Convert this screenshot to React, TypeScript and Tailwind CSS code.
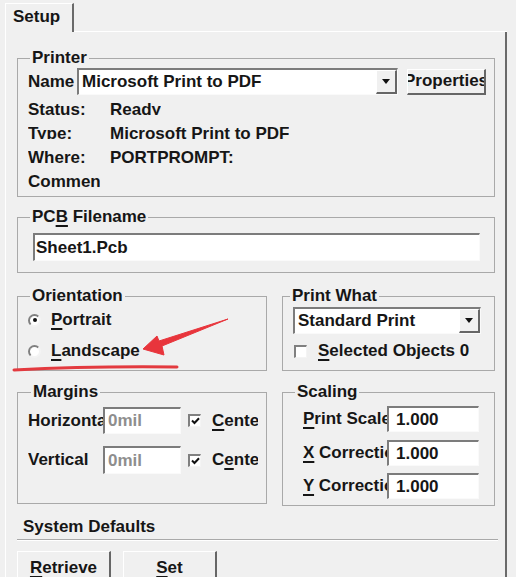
import type { ReactNode } from "react";

type BoxProps = {
  className?: string;
  children?: ReactNode;
};

function U({ children }: { children: ReactNode }) {
  return <span className="underline decoration-[1.5px] underline-offset-[3px]">{children}</span>;
}

function Group({
  label,
  className,
  legendClassName = "ml-[12px]",
  children
}: BoxProps & { label: ReactNode; legendClassName?: string }) {
  return (
    <fieldset className={`min-w-0 border border-[#a9a9a9] p-0 ${className ?? ""}`}>
      <legend className={`px-[2px] leading-[20px] ${legendClassName}`}>{label}</legend>
      {children}
    </fieldset>
  );
}

function Sunken({ className, children }: BoxProps) {
  return (
    <div
      className={`flex items-center overflow-hidden whitespace-nowrap border-t-2 border-l-2 border-r border-b border-t-[#7c7c7c] border-l-[#7c7c7c] border-r-[#fafafa] border-b-[#fafafa] bg-white ${className ?? ""}`}
    >
      {children}
    </div>
  );
}

function Raised({ className, children }: BoxProps) {
  return (
    <div
      className={`flex items-center justify-center overflow-hidden whitespace-nowrap border-t border-l border-r-2 border-b-2 border-t-white border-l-white border-r-[#666] border-b-[#666] bg-[#f0f0f0] ${className ?? ""}`}
    >
      {children}
    </div>
  );
}

function Combo({ text, className }: { text: string; className?: string }) {
  return (
    <Sunken className={className}>
      <span className="flex-1 overflow-hidden pl-[3px]">{text}</span>
      <Raised className="h-full w-[21px] shrink-0">
        <svg width="8" height="5" viewBox="0 0 8 5">
          <path d="M0 0 H8 L4 5 Z" fill="#111" />
        </svg>
      </Raised>
    </Sunken>
  );
}

function Radio({ checked }: { checked?: boolean }) {
  return (
    <div className="flex h-[13px] w-[13px] shrink-0 items-center justify-center rounded-full border-2 border-t-[#808080] border-l-[#808080] border-r-[#f4f4f4] border-b-[#f4f4f4] bg-white">
      {checked && <div className="h-[4px] w-[4px] rounded-full bg-[#111]" />}
    </div>
  );
}

function Check({ checked }: { checked?: boolean }) {
  return (
    <div className="flex h-[13px] w-[13px] shrink-0 items-center justify-center border-t-2 border-l-2 border-r border-b border-t-[#808080] border-l-[#808080] border-r-[#f4f4f4] border-b-[#f4f4f4] bg-white">
      {checked && (
        <svg width="9" height="8" viewBox="0 0 9 8">
          <path d="M1 3.5 L3.5 6 L8 1.2" fill="none" stroke="#111" strokeWidth="2" />
        </svg>
      )}
    </div>
  );
}

function InfoRow({ label, value }: { label: string; value: string }) {
  return (
    <div className="flex h-[24px] pt-[5px]">
      <span className="block h-[14px] w-[72px] shrink-0 overflow-hidden whitespace-nowrap leading-[17px]">
        {label}
      </span>
      <span className="ml-[10px] block h-[14px] overflow-hidden whitespace-nowrap leading-[17px]">
        {value}
      </span>
    </div>
  );
}

function ScaleRow({ label, value, className }: { label: ReactNode; value: string; className?: string }) {
  return (
    <div className={`flex h-[26px] items-center ${className ?? ""}`}>
      <span className="w-[84px] shrink-0 overflow-hidden whitespace-nowrap">{label}</span>
      <Sunken className="h-[26px] w-[92px] pl-[7px]">{value}</Sunken>
    </div>
  );
}

function MarginRow({ label, center, className }: { label: string; center: ReactNode; className?: string }) {
  return (
    <div className={`flex items-center ${className ?? ""}`}>
      <span className="w-[75px] shrink-0 overflow-hidden whitespace-nowrap">{label}</span>
      <Sunken className="h-full w-[78px] pl-[3px] text-[#8e8e8e]">0mil</Sunken>
      <div className="ml-[7px]">
        <Check checked />
      </div>
      <span className="ml-[11px] w-[46px] overflow-hidden whitespace-nowrap">{center}</span>
    </div>
  );
}

export default function App() {
  return (
    <div className="relative flex h-[577px] w-[516px] flex-col overflow-hidden bg-[#f0f0f0] font-['Liberation_Sans',Arial,sans-serif] text-[17px] font-bold leading-[20px] text-[#161616]">
      {/* tab strip */}
      <div className="flex h-[32px] shrink-0">
        <div className="ml-[5px] mt-[3px] h-[29px] w-[69px] border-t border-l border-r-2 border-t-white border-l-white border-r-[#6a6a6a] pl-[7px] pt-[3px]">
          Setup
        </div>
        <div className="w-[433px] border-b border-b-white" />
      </div>

      {/* page */}
      <div className="ml-[5px] w-[502px] flex-1 border-l border-r-2 border-l-white border-r-[#6a6a6a] pl-[11px] pt-[16px]">
        <div className="w-[478px]">
          <Group label="Printer">
            <div className="pl-[10px] pb-[4px]">
              <div className="flex h-[27px] items-center">
                <span className="w-[49px] shrink-0">Name</span>
                <Combo text="Microsoft Print to PDF" className="h-[27px] w-[321px]" />
                <Raised className="ml-[9px] h-[26px] w-[79px]">Properties</Raised>
              </div>
              <div className="mt-[1px]">
                <InfoRow label="Status:" value="Ready" />
                <InfoRow label="Type:" value="Microsoft Print to PDF" />
                <InfoRow label="Where:" value="PORTPROMPT:" />
                <InfoRow label="Comment:" value="" />
              </div>
            </div>
          </Group>

          <Group
            className="mt-[10px]"
            label={
              <>
                PC<U>B</U> Filename
              </>
            }
          >
            <div className="pl-[15px] pt-[6px] pb-[11px]">
              <Sunken className="h-[28px] w-[447px] pl-[1px]">Sheet1.Pcb</Sunken>
            </div>
          </Group>

          <div className="mt-[13px] flex items-start">
            <Group label="Orientation" className="w-[250px]">
              <div className="pl-[10px] pb-[5px]">
                <div className="flex h-[28px] items-center">
                  <Radio checked />
                  <span className="ml-[10px]">
                    <U>P</U>ortrait
                  </span>
                </div>
                <div className="mt-[3px] flex h-[28px] items-center">
                  <Radio />
                  <span className="ml-[10px]">
                    <U>L</U>andscape
                  </span>
                </div>
              </div>
            </Group>
            <Group label="Print What" className="ml-[15px] w-[213px]" legendClassName="ml-[7px]">
              <div className="pl-[10px] pb-[5px]">
                <Combo text="Standard Print" className="mt-[1px] h-[27px] w-[188px]" />
                <div className="mt-[3px] flex h-[28px] items-center">
                  <div className="ml-[1px]">
                    <Check />
                  </div>
                  <span className="ml-[11px] whitespace-nowrap">
                    <U>S</U>elected Objects 0
                  </span>
                </div>
              </div>
            </Group>
          </div>

          <div className="mt-[11px] flex items-start">
            <Group label="Margins" className="w-[250px]" legendClassName="ml-[13px]">
              <div className="pl-[10px] pb-[29px]">
                <MarginRow
                  className="mt-[5px] h-[27px]"
                  label="Horizontal"
                  center={
                    <>
                      <U>C</U>enter
                    </>
                  }
                />
                <MarginRow
                  className="mt-[12px] h-[28px]"
                  label="Vertical"
                  center={
                    <>
                      C<U>e</U>nter
                    </>
                  }
                />
              </div>
            </Group>
            <Group label="Scaling" className="ml-[15px] w-[213px]">
              <div className="pl-[20px] pb-[6px]">
                <ScaleRow
                  className="mt-[4px]"
                  label={
                    <>
                      <U>P</U>rint Scale
                    </>
                  }
                  value="1.000"
                />
                <ScaleRow
                  className="mt-[8px]"
                  label={
                    <>
                      <U>X</U> Correction
                    </>
                  }
                  value="1.000"
                />
                <ScaleRow
                  className="mt-[7px]"
                  label={
                    <>
                      <U>Y</U> Correction
                    </>
                  }
                  value="1.000"
                />
              </div>
            </Group>
          </div>

          <div className="mt-[11px] ml-[6px]">System Defaults</div>
          <div className="mt-[2px] h-[2px] w-[481px] border-t border-b border-t-[#a9a9a9] border-b-white" />
          <div className="mt-[10px] flex">
            <Raised className="h-[34px] w-[94px]">
              <span>
                <U>R</U>etrieve
              </span>
            </Raised>
            <Raised className="ml-[12px] h-[34px] w-[94px]">
              <span>
                <U>S</U>et
              </span>
            </Raised>
          </div>
        </div>
      </div>

      {/* red annotation drawn over the dialog */}
      <svg className="pointer-events-none absolute inset-0" width="516" height="577" viewBox="0 0 516 577">
        <polygon
          points="143,349 157,336 159,341 228,319 162,346 164,355"
          fill="#e8353c"
          stroke="#e8353c"
          strokeWidth="1"
          strokeLinejoin="round"
        />
        <path d="M14 370 Q 90 366 177 367" fill="none" stroke="#e33a3f" strokeWidth="3" strokeLinecap="round" />
      </svg>
    </div>
  );
}
